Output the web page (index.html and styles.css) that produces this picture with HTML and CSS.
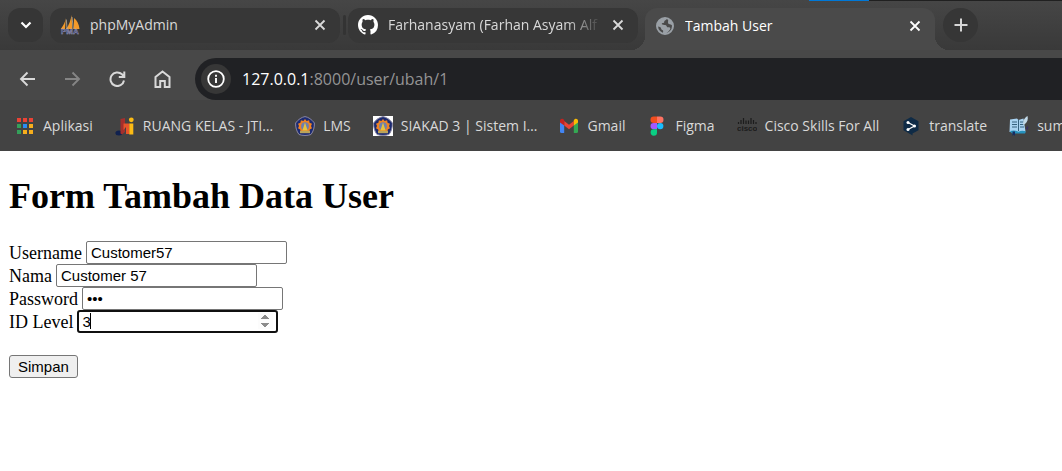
FILE: index.html
```html
<!DOCTYPE html>
<html lang="id">
<head>
<meta charset="utf-8">
<title>Tambah User</title>
<link rel="stylesheet" href="styles.css">
</head>
<body>
<svg width="0" height="0" class="defs" aria-hidden="true">
  <symbol id="close" viewBox="0 0 12 12"><path d="M1.5 1.5l9 9M10.5 1.5l-9 9" fill="none" stroke="currentColor" stroke-width="1.8"/></symbol>
  <symbol id="crest" viewBox="0 0 20 20">
    <path d="M10 .6C13 1 17 3.500 19.400 7c.2 4-1 8.500-3.400 11.500-3.600 1.300-8.400 1.300-12 0C1.600 15.500.4 11 .6 7 3 3.500 7 1 10 .6z" fill="#1d2b72" stroke="#8a87a0" stroke-width="1"/>
    <path d="M10 3l1.600 1.900 2.500-.6.5 2.500 2.400.9-1 2.300 1 2.300-2.200 1.200-.5 2.500H5.700l-.5-2.500L3 12.300 4 10 3 7.700l2.400-.9.5-2.500 2.500.6z" fill="#f08322"/>
    <circle cx="10" cy="10.200" r="3.900" fill="#6f7fae"/>
    <path d="M10 6.500l2.600 8H7.400z" fill="#e9c33c"/>
    <path d="M5 14.800h10v2.400H5z" fill="#b9a45b"/>
  </symbol>
</svg>

<header class="browser">
  <div class="tabstrip">
    <button class="round" aria-label="Cari tab"><svg width="12" height="8" viewBox="0 0 12 8"><path d="M1.500 1.500L6 6l4.500-4.500" fill="none" stroke="#fff" stroke-width="2.200"/></svg></button>
    <div class="tab">
      <svg width="20" height="20" viewBox="0 0 20 20">
        <path d="M5.800 3L5 14H.8C3.500 10.500 5.200 7 5.800 3zM11.500 0l.8 14H6C9 10.500 10.800 5 11.500 0zM14 3c3 2.500 5 6 5.500 11h-5.800z" fill="#f39a2b"/>
        <path d="M12 2l1.300 12M6.300 4.500L7 14" stroke="#b9b0a0" stroke-width=".8"/>
        <text x="1" y="19" class="pma">PMA</text>
      </svg>
      <span class="title">phpMyAdmin</span>
      <button class="close" aria-label="Tutup"><svg width="12" height="12"><use href="#close"/></svg></button>
    </div>
    <i class="divider"></i>
    <div class="tab">
      <svg width="20" height="20" viewBox="0 0 16 16"><path fill="#fff" d="M8 0C3.580 0 0 3.580 0 8c0 3.540 2.290 6.530 5.470 7.590.4.070.55-.17.55-.38 0-.19-.01-.82-.01-1.490-2.010.37-2.530-.49-2.690-.94-.09-.23-.48-.94-.82-1.130-.28-.15-.68-.52-.01-.53.63-.01 1.080.58 1.230.82.72 1.210 1.870.87 2.330.66.07-.52.28-.87.51-1.070-1.780-.2-3.640-.89-3.640-3.950 0-.87.31-1.590.82-2.150-.08-.2-.36-1.020.08-2.120 0 0 .67-.21 2.200.82.64-.18 1.320-.27 2-.27s1.360.09 2 .27c1.530-1.040 2.200-.82 2.200-.82.44 1.100.16 1.920.08 2.120.51.56.82 1.270.82 2.150 0 3.070-1.870 3.750-3.650 3.950.29.25.54.73.54 1.480 0 1.070-.01 1.930-.01 2.200 0 .21.15.46.55.38A8.010 8.010 0 0016 8c0-4.420-3.580-8-8-8z"/></svg>
      <span class="title fade">Farhanasyam (Farhan Asyam Alf</span>
      <button class="close" aria-label="Tutup"><svg width="12" height="12"><use href="#close"/></svg></button>
    </div>
    <div class="tab active">
      <svg width="20" height="20" viewBox="0 0 20 20"><circle cx="10" cy="10" r="8" fill="#4a4a4a" stroke="#9aa0a6" stroke-width="2"/><path d="M2 8C2.500 4.500 6 1.500 10 2c1 .2 1.500.8 1.200 1.600-.3.900-1.200.9-1.700 1.300-.6.500 0 1.400-.7 1.900-.6.400-1.700.1-2 .8-.3 1 1.200 1.300 2.500 1.300 1.200 0 2.200.3 2.500 1.500.2 1 1.200.9 2.200.9 1.300 0 1.700 1 1 2.300-1.600 2.800-4 4.200-6.500 4.300-.9-1-.3-2-.3-2.900 0-1.200-2.200-.9-2.200-2.800 0-1.200-1.800-1.500-3-1.800C2.200 10 1.900 9 2 8zM13.500 3c2.500 1.200 4 3.500 4.300 6-1.300 0-1.800-.8-3-.8-1.300 0-1.800-1-1.800-2 0-1.200.2-2 .5-3.200z" fill="#9aa0a6"/></svg>
      <span class="title">Tambah User</span>
      <button class="close" aria-label="Tutup"><svg width="12" height="12"><use href="#close"/></svg></button>
    </div>
    <button class="round" aria-label="Tab baru"><svg width="14" height="14" viewBox="0 0 14 14"><path d="M7 .5v13M.5 7h13" stroke="#d6d6d6" stroke-width="2"/></svg></button>
    <i class="edge"></i>
  </div>

  <div class="toolbar">
    <nav class="nav">
      <button aria-label="Kembali"><svg width="17" height="16" viewBox="0 0 17 16"><path d="M16 8H2M8.500 1.500L2 8l6.500 6.500" fill="none" stroke="#d9d9d9" stroke-width="1.900"/></svg></button>
      <button aria-label="Maju"><svg width="17" height="16" viewBox="0 0 17 16"><path d="M1 8h14M8.500 1.500L15 8l-6.500 6.500" fill="none" stroke="#858585" stroke-width="1.900"/></svg></button>
      <button aria-label="Muat ulang"><svg width="17" height="16" viewBox="0 0 17 16"><path d="M15 9.500A6.800 6.800 0 1 1 13 3.300L15 5.500M15.300.5V6H9.800" fill="none" stroke="#d9d9d9" stroke-width="2"/></svg></button>
      <button aria-label="Beranda"><svg width="17" height="18" viewBox="0 0 17 18"><path d="M1.500 17V7l7-5.500 7 5.500v10h-4.700v-6H6.200v6z" fill="none" stroke="#d9d9d9" stroke-width="2"/></svg></button>
    </nav>
    <div class="omnibox">
      <button class="info" aria-label="Informasi situs"><svg width="18" height="18" viewBox="0 0 18 18"><circle cx="9" cy="9" r="7.800" fill="none" stroke="#fff" stroke-width="1.800"/><path d="M9 8v5M9 4.800v2" stroke="#fff" stroke-width="1.900"/></svg></button>
      <span class="url"><b>127.0.0.1</b>:8000/user/ubah/1</span>
    </div>
  </div>

  <nav class="bookmarks">
    <a href="#"><svg width="20" height="20" viewBox="0 0 20 20"><path d="M2 2h4v4H2zM8 2h4v4H8zM14 2h4v4h-4z" fill="#ea4335"/><path d="M2 8h4v4H2zM2 14h4v4H2z" fill="#34a05a"/><path d="M8 8h4v4H8z" fill="#2a8cf4"/><path d="M14 8h4v4h-4zM8 14h4v4H8zM14 14h4v4h-4z" fill="#f6ae1c"/></svg>Aplikasi</a>
    <a href="#"><svg width="20" height="20" viewBox="0 0 20 20"><ellipse cx="4" cy="17" rx="3.600" ry="2.500" fill="#10214f"/><path d="M5.500 3l4.500-1v14l-3 2.500-1.500-1z" fill="#a52f2c"/><path d="M8.500 7.500h6V18H11v-7L8.500 14z" fill="#e8552b"/><path d="M14.300 7.500h4v11h-4z" fill="#fbbb14"/><circle cx="16.300" cy="3.800" r="2.400" fill="#fbbb14"/></svg>RUANG KELAS - JTI…</a>
    <a href="#"><svg width="20" height="20"><use href="#crest"/></svg>LMS</a>
    <a href="#"><svg width="20" height="20"><path d="M0 0h20v20H0z" fill="#fff"/><use href="#crest"/></svg>SIAKAD 3 | Sistem I…</a>
    <a href="#"><svg width="20" height="20" viewBox="0 0 20 20"><path d="M1 5.500l4.200 3V17H2.500A1.500 1.500 0 0 1 1 15.500z" fill="#4285f4"/><path d="M19 5.500l-4.200 3V17h2.700a1.500 1.500 0 0 0 1.500-1.500z" fill="#34a853"/><path d="M5.200 5L10 8.700 14.800 5v4.600L10 13.300 5.200 9.600z" fill="#ea4335"/><path d="M1 6V5c0-2 2-2.700 3.300-1.700L5.200 4v5.600L1 6.500z" fill="#c5221f"/><path d="M19 6V5c0-2-2-2.700-3.300-1.700l-.9.700v5.600L19 6.500z" fill="#fbbc04"/></svg>Gmail</a>
    <a href="#"><svg width="20" height="20" viewBox="0 0 20 20"><path d="M10 .5H6.700a3.200 3.200 0 0 0 0 6.400H10z" fill="#f24e1e"/><path d="M10 .5h3.300a3.200 3.200 0 0 1 0 6.400H10z" fill="#ff7262"/><path d="M10 6.900H6.700a3.200 3.200 0 0 0 0 6.400H10z" fill="#a259ff"/><circle cx="13.200" cy="10.100" r="3.200" fill="#1abcfe"/><path d="M10 13.300H6.700A3.200 3.200 0 1 0 10 16.500z" fill="#0acf83"/></svg>Figma</a>
    <a href="#"><svg width="20" height="20" viewBox="0 0 20 20"><path d="M1.500 6v2M4 4v4M6.500 2v6M9 4.500V8M11.500 4.500V8M14 2v6M16.500 4v4M19 6v2" stroke="#1c1c1c" stroke-width="1.200"/><text x="0" y="15" class="cisco">cisco</text></svg>Cisco Skills For All</a>
    <a href="#"><svg width="20" height="20" viewBox="0 0 20 20"><path d="M10 1l7.500 4.300v9L11.500 17.500v2L10 18.500l-7.500-4.200v-9z" fill="#0f2b46"/><path d="M7 6.500l6.500 3.400L7 13.500" fill="none" stroke="#fff" stroke-width="1.200"/><g fill="#fff"><circle cx="7" cy="6.500" r="1.500"/><circle cx="13.500" cy="9.900" r="1.500"/><circle cx="7" cy="13.500" r="1.500"/></g></svg>translate</a>
    <a href="#"><svg width="20" height="20" viewBox="0 0 20 20"><path d="M1 3.500l7-1 1.500 1.500 5-1.500 2 13-7 1-9-.5z" fill="#a9d3f2"/><path d="M9.500 4v11M3 6h5M3 8.500h5M3 11h5M11 6h4M11 8.500h4M11 11h4" stroke="#34617f" stroke-width="1"/><path d="M1 15q5-1.500 8.500.8Q13 14 17 15.500L16 17.500H3z" fill="#2692bd"/><path d="M3.500 15.500h2.500V20l-1.300-1.200L3.500 20z" fill="#162c61"/><path d="M14 9c0-4 1-7 4.500-9 .8 3 0 6-2.500 8z" fill="#c1d9e8"/><path d="M18 10l1.500 1-1 3-1.500-1z" fill="#393062"/></svg>sum</a>
  </nav>
</header>

<main class="page">
  <h1>Form Tambah Data User</h1>
  <form>
    <div class="row"><label for="username">Username</label><input id="username" type="text" value="Customer57"></div>
    <div class="row"><label for="nama">Nama</label><input id="nama" type="text" value="Customer 57"></div>
    <div class="row"><label for="password">Password</label><input id="password" type="password" value="123"></div>
    <div class="row"><label for="level">ID Level</label><input id="level" class="focused" type="number" value="3"></div>
    <button class="submit" type="button">Simpan</button>
  </form>
</main>
</body>
</html>
```
FILE: styles.css
```css
* { box-sizing: border-box; }
body { margin: 0; background: #fff; overflow: hidden; }
.defs { position: absolute; }
svg { display: block; flex: none; }
button { border: 0; padding: 0; background: none; color: inherit; }

.browser {
  background: #484848;
  color: #d9d9d9;
  font: 14px/20px "Open Sans", "Noto Sans", sans-serif;
  overflow: hidden;
}
.tabstrip {
  position: relative;
  display: flex;
  align-items: center;
  height: 50px;
  padding: 0 8px;
  background: linear-gradient(#464646, #393939);
}
.round {
  display: grid;
  place-items: center;
  flex: none;
  width: 35px;
  height: 34px;
  border-radius: 12px;
  background: #363636;
}
.tab + .round { border-radius: 50%; margin-left: 8px; }
.tab {
  display: flex;
  align-items: center;
  flex: none;
  gap: 10px;
  width: 290px;
  height: 35px;
  padding: 0 14px 0 10px;
  border-radius: 12px;
  background: #373737;
}
.round + .tab { margin-left: 7px; }
.title { flex: 1; overflow: hidden; white-space: nowrap; }
.fade { -webkit-mask: linear-gradient(to right, #000 calc(100% - 36px), transparent); mask: linear-gradient(to right, #000 calc(100% - 36px), transparent); }
.divider { flex: none; width: 3px; height: 20px; margin: 0 2px 0 3px; border-radius: 2px; background: #333; }
.active {
  position: relative;
  align-self: flex-end;
  height: 42px;
  margin-left: 7px;
  padding-bottom: 7px;
  border-radius: 12px 12px 0 0;
  background: #4a4a4a;
  color: #fff;
}
.active::before, .active::after {
  content: "";
  position: absolute;
  bottom: 0;
  width: 14px;
  height: 14px;
}
.active::before { right: 100%; background: radial-gradient(circle at 0 0, transparent 14px, #4a4a4a 14px); }
.active::after { left: 100%; background: radial-gradient(circle at 100% 0, transparent 14px, #4a4a4a 14px); }
.edge { position: absolute; top: 0; right: 0; width: 253px; height: 1px; background: linear-gradient(to right, #0078d7 60px, #202020 60px); }
.pma { font: bold 8px "Liberation Sans", sans-serif; fill: #34386b; stroke: #aaaac8; stroke-width: .4px; }
.cisco { font: bold 8px "Liberation Sans", sans-serif; fill: #1c1c1c; }

.toolbar { display: flex; align-items: center; padding-top: 8px; }
.nav { display: flex; gap: 28px; padding: 0 24px 0 19px; align-items: center; }
.nav button { flex: none; }
.omnibox {
  display: flex;
  align-items: center;
  flex: 1;
  gap: 11px;
  height: 42px;
  padding-left: 6px;
  border-radius: 21px 0 0 21px;
  background: #202124;
}
.info { display: grid; place-items: center; width: 30px; height: 30px; border-radius: 50%; background: #373737; }
.url { font-size: 16px; line-height: 24px; color: #949494; }
.url b { font-weight: 400; color: #fff; }
.bookmarks { display: flex; gap: 22px; height: 51px; padding-left: 15px; align-items: center; background: #434343; }
.bookmarks a { display: flex; flex: none; gap: 8px; align-items: center; color: inherit; text-decoration: none; white-space: nowrap; }

.page { padding: 24px 9px; font: 18px/20px "Liberation Serif", serif; color: #000; }
h1 { margin: 0 0 24px; font-size: 36px; line-height: 42px; }
.row { display: flex; align-items: center; gap: 4px; }
.row input {
  width: 201px;
  height: 23px;
  padding: 1px 4px;
  border: 1px solid #767676;
  border-radius: 2px;
  background: #fff;
  font: 15px "Liberation Sans", sans-serif;
}
.row .focused { border: 2px solid #101010; border-radius: 3px; padding: 0 3px; outline: 0; background: linear-gradient(#000, #000) 11px 1px / 1px 16px no-repeat #fff; }
.focused::-webkit-inner-spin-button { opacity: 1; }
.submit {
  margin-top: 22px;
  height: 23px;
  padding: 0 8px;
  border: 1px solid #767676;
  border-radius: 3px;
  background: #efefef;
  font: 15px "Liberation Sans", sans-serif;
}
```
